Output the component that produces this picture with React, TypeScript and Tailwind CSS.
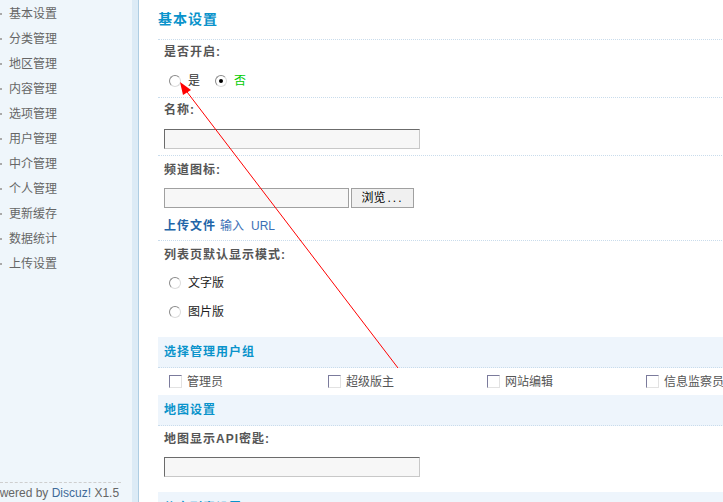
import React from "react";

const menu = ["基本设置","分类管理","地区管理","内容管理","选项管理","用户管理","中介管理","个人管理","更新缓存","数据统计","上传设置"];

function Radio({ checked }: { checked?: boolean }) {
  return (
    <span className="relative inline-flex w-[12px] h-[12px] rounded-full border border-t-[#8a8a8a] border-l-[#8a8a8a] border-r-[#dcdcdc] border-b-[#dcdcdc] bg-white items-center justify-center shrink-0">
      {checked && <span className="w-[4px] h-[4px] rounded-full bg-black" />}
    </span>
  );
}

function Check() {
  return (
    <span className="inline-block w-[13px] h-[13px] border border-t-[#7b7b9c] border-l-[#7b7b9c] border-r-[#e2e2e2] border-b-[#e2e2e2] bg-white shrink-0" />
  );
}

function TextInput({ w }: { w: string }) {
  return (
    <div className={`${w} h-[20px] border border-t-[#6b6b6b] border-l-[#6b6b6b] border-r-[#c8c8c8] border-b-[#c8c8c8] bg-[#f7f7f7]`} />
  );
}

const label = "font-bold text-[12px] tracking-[1px] text-[#555]";
const sep = "border-b border-dotted border-[#c9dcec]";

export default function App() {
  return (
    <div
      className="relative w-[723px] h-[502px] overflow-hidden flex bg-white text-[12px]"
      style={{ fontFamily: '"Liberation Sans", "Noto Sans CJK SC", sans-serif' }}
    >
      {/* Sidebar */}
      <div className="w-[139px] shrink-0 flex h-full">
        <div className="w-[132px] bg-[#eff6fb] flex flex-col h-full">
          <div className="flex flex-col pt-[1px]">
            {menu.map((m) => (
              <div key={m} className="h-[25px] shrink-0 flex items-center text-[#666] text-[12px]">
                <span className="w-[2px] h-[2px] bg-[#aaa] mr-[7px]" />
                {m}
              </div>
            ))}
          </div>
          <div className="mt-auto">
            <div className="w-[121px] border-t border-dashed border-[#cfcfcf]" />
            <div className="h-[19px] flex items-center whitespace-nowrap ml-[-15px] text-[12px] text-[#666]">
              Powered by&nbsp;<span className="text-[#3e6a98]">Discuz!</span>&nbsp;X1.5
            </div>
          </div>
        </div>
        <div className="w-[6px] bg-[#dcebf6]" />
        <div className="w-[1px] bg-[#aecde2]" />
      </div>

      {/* Main */}
      <div className="flex-1 pl-[19px] h-full">
        <div className={`h-[40px] flex items-center ${sep}`}>
          <span className="text-[14px] font-bold tracking-[1px] text-[#0a93cb]">基本设置</span>
        </div>

        {/* 是否开启 */}
        <div className={`px-[6px] ${sep}`}>
          <div className={`h-[24px] flex items-center ${label}`}>是否开启:</div>
          <div className="h-[33px] flex items-center pl-[5px]">
            <Radio />
            <span className="ml-[7px] text-[#333]">是</span>
            <span className="ml-[15px] flex"><Radio checked /></span>
            <span className="ml-[7px] text-[#00cc00]">否</span>
          </div>
        </div>

        {/* 名称 */}
        <div className={`px-[6px] ${sep}`}>
          <div className={`h-[24px] flex items-center ${label}`}>名称:</div>
          <div className="pt-[7px] pb-[6px]">
            <TextInput w="w-[256px]" />
          </div>
        </div>

        {/* 频道图标 */}
        <div className={`px-[6px] ${sep}`}>
          <div className={`h-[28px] flex items-center ${label}`}>频道图标:</div>
          <div className="pt-[4px] pb-[4px] flex items-center gap-[2px]">
            <div className="w-[185px] h-[20px] border border-[#a0a0a0] bg-[#f7f7f7]" />
            <div className="w-[63px] h-[20px] border border-[#a0a0a0] bg-[#f0f0f0] flex items-center justify-center text-[12px] text-black">
              浏览<span className="tracking-[2px] ml-[2px]">...</span>
            </div>
          </div>
          <div className="h-[28px] flex items-center">
            <span className="font-bold text-[#2265a8] tracking-[1px]">上传文件</span>
            <span className="ml-[4px] text-[#3b70b5]">输入</span>
            <span className="ml-[7px] text-[#3b70b5]">URL</span>
          </div>
        </div>

        {/* 列表页 */}
        <div className="px-[6px] pb-[11px]">
          <div className={`h-[27px] flex items-center ${label}`}>列表页默认显示模式:</div>
          <div className="h-[29px] flex items-center pl-[5px]">
            <Radio />
            <span className="ml-[7px] text-[#222]">文字版</span>
          </div>
          <div className="h-[29px] flex items-center pl-[5px]">
            <Radio />
            <span className="ml-[7px] text-[#222]">图片版</span>
          </div>
        </div>

        {/* 选择管理用户组 */}
        <div className={`h-[31px] bg-[#eef5fc] px-[6px] flex items-center ${sep}`}>
          <span className="font-bold text-[12px] tracking-[1px] text-[#0a93cb]">选择管理用户组</span>
        </div>
        <div className="h-[27px] px-[6px] grid grid-cols-[159px_159px_159px_159px] items-center">
          {["管理员", "超级版主", "网站编辑", "信息监察员"].map((t) => (
            <div key={t} className="flex items-center pl-[5px] whitespace-nowrap">
              <Check />
              <span className="ml-[5px] text-[#555]">{t}</span>
            </div>
          ))}
        </div>

        {/* 地图设置 */}
        <div className={`h-[31px] bg-[#eef5fc] px-[6px] flex items-center ${sep}`}>
          <span className="font-bold text-[12px] tracking-[1px] text-[#0a93cb]">地图设置</span>
        </div>
        <div className="px-[6px]">
          <div className={`h-[25px] flex items-center ${label}`}>地图显示API密匙:</div>
          <div className="pt-[6px] pb-[15px]">
            <TextInput w="w-[256px]" />
          </div>
        </div>
        <div className="h-[31px] bg-[#eef5fc] px-[6px] flex items-center">
          <span className="font-bold text-[12px] tracking-[1px] text-[#0a93cb]">信息列表设置</span>
        </div>
      </div>

      {/* Red annotation arrow */}
      <svg className="absolute left-0 top-0 pointer-events-none" width="723" height="502">
        <line x1="398" y1="368" x2="184" y2="88" stroke="#ff0000" strokeWidth="1" />
        <polygon points="180,82 183,95 191,90" fill="#ff0000" />
      </svg>
    </div>
  );
}
